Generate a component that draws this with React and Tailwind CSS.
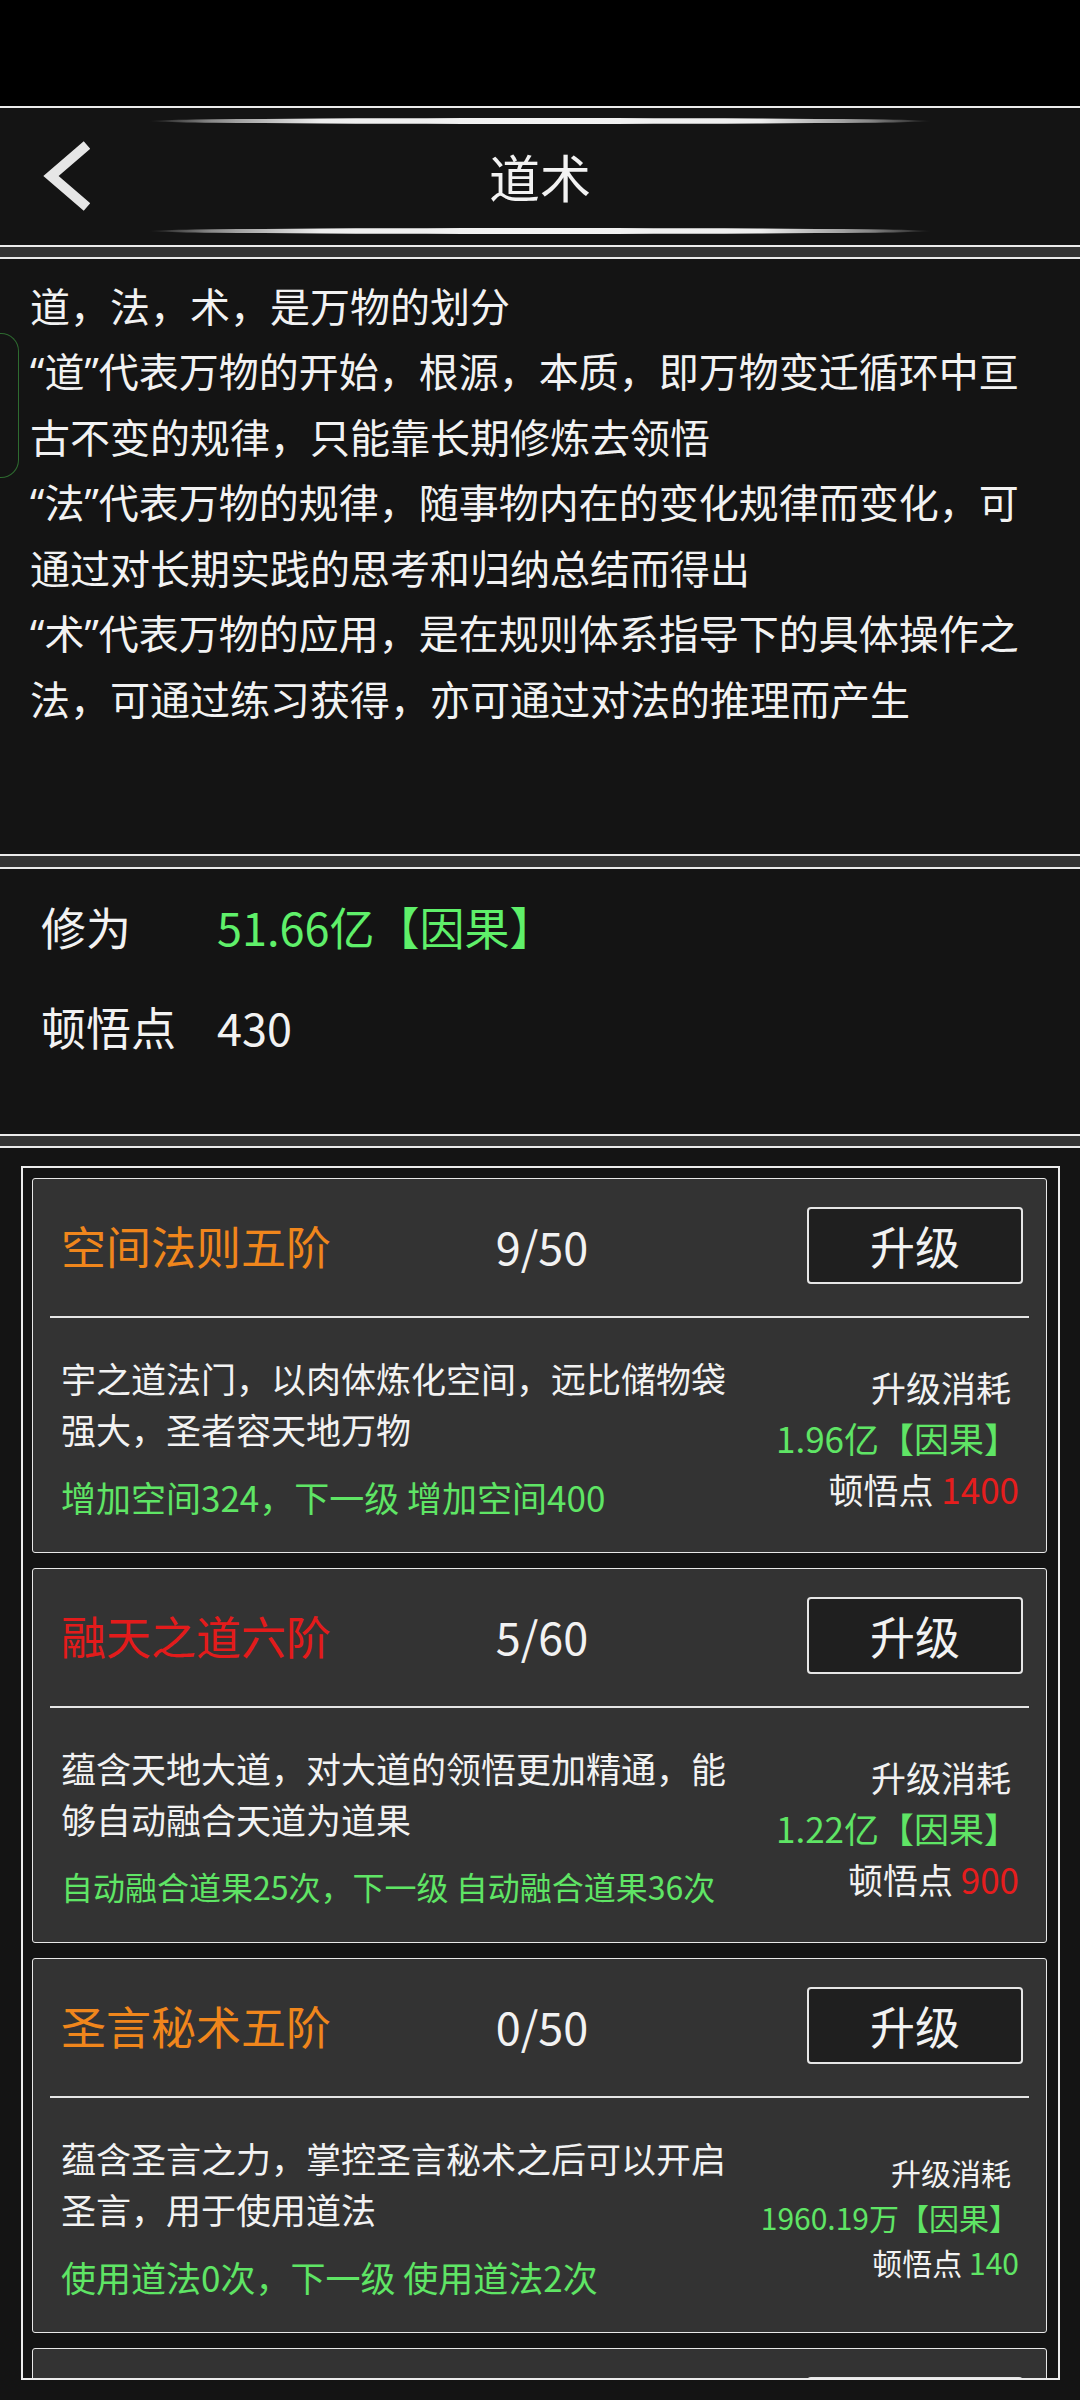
import React from 'react';

const items = [
  {
    name: '空间法则五阶',
    nameColor: 'text-[#f0861c]',
    level: '9/50',
    desc: '宇之道法门，以肉体炼化空间，远比储物袋强大，圣者容天地万物',
    effect: '增加空间324，下一级 增加空间400',
    effectSize: 'text-[35px]',
    cost: '1.96亿【因果】',
    points: '1400',
    pointsColor: 'text-[#e61d1d]',
    small: false,
  },
  {
    name: '融天之道六阶',
    nameColor: 'text-[#e31b1b]',
    level: '5/60',
    desc: '蕴含天地大道，对大道的领悟更加精通，能够自动融合天道为道果',
    effect: '自动融合道果25次，下一级 自动融合道果36次',
    effectSize: 'text-[32px]',
    cost: '1.22亿【因果】',
    points: '900',
    pointsColor: 'text-[#e61d1d]',
    small: false,
  },
  {
    name: '圣言秘术五阶',
    nameColor: 'text-[#f0861c]',
    level: '0/50',
    desc: '蕴含圣言之力，掌控圣言秘术之后可以开启圣言，用于使用道法',
    effect: '使用道法0次，下一级 使用道法2次',
    effectSize: 'text-[35px]',
    cost: '1960.19万【因果】',
    points: '140',
    pointsColor: 'text-[#5fe565]',
    small: true,
  },
];

// quoted word, then the rest of the line
const Q = ({ children }) => (
  <>
    <span className="font-['Noto_Sans',sans-serif]">“</span>
    {children}
    <span className="font-['Noto_Sans',sans-serif]">”</span>
  </>
);

const introLines = [
  <>道，法，术，是万物的划分</>,
  <><Q>道</Q>代表万物的开始，根源，本质，即万物变迁循环中亘</>,
  <>古不变的规律，只能靠长期修炼去领悟</>,
  <><Q>法</Q>代表万物的规律，随事物内在的变化规律而变化，可</>,
  <>通过对长期实践的思考和归纳总结而得出</>,
  <><Q>术</Q>代表万物的应用，是在规则体系指导下的具体操作之</>,
  <>法，可通过练习获得，亦可通过对法的推理而产生</>,
];

function GlowLine() {
  return (
    <div className="w-[782px] h-[6px] rounded-[50%] bg-[linear-gradient(90deg,transparent_0%,#8a8a8a_8%,#ededed_22%,#f2f2f2_50%,#ededed_78%,#8a8a8a_92%,transparent_100%)]" />
  );
}

function UpgradeButton({ label = '升级' }) {
  return (
    <button className="justify-self-end w-[216px] h-[77px] border-2 border-[#e6e6e6] rounded-[4px] bg-[#1f1f1f] text-[45px] leading-none text-[#f2f2f2] flex items-center justify-center">
      {label}
    </button>
  );
}

function SkillCard({ item }) {
  const right = item.small ? 'text-[30px] leading-[45px]' : 'text-[35px] leading-[51px]';
  return (
    <div className="w-[1015px] h-[375px] shrink-0 border border-[#e8e8e8] bg-[#333333] rounded-[3px] flex flex-col">
      {/* Title row */}
      <div className="h-[137px] pb-[4px] pl-[28px] pr-[23px] grid grid-cols-[1fr_auto_1fr] items-center">
        <span className={`text-[45px] leading-none whitespace-nowrap ${item.nameColor}`}>{item.name}</span>
        <span className="text-[45px] leading-none text-[#f2f2f2]">{item.level}</span>
        <UpgradeButton />
      </div>

      <div className="mx-[17px] h-[2px] bg-[#e6e6e6]" />

      {/* Body */}
      <div className="h-[234px] pt-[4px] pl-[28px] pr-[27px] flex items-center">
        <div className="w-[680px] shrink-0">
          <p className="text-[35px] leading-[51px] text-[#f2f2f2]">{item.desc}</p>
          <p className={`mt-[17px] leading-[51px] whitespace-nowrap text-[#5fe565] ${item.effectSize}`}>
            {item.effect}
          </p>
        </div>
        <div className={`flex-1 text-right whitespace-nowrap ${right}`}>
          <div className="mr-[8px] text-[#f2f2f2]">升级消耗</div>
          <div className="text-[#5fe565]">{item.cost}</div>
          <div className="text-[#f2f2f2]">
            顿悟点 <span className={item.pointsColor}>{item.points}</span>
          </div>
        </div>
      </div>
    </div>
  );
}

export default function App() {
  return (
    <div className="relative w-[1080px] h-[2400px] overflow-hidden bg-[#141414] flex flex-col font-['Noto_Sans_CJK_SC','Noto_Sans',sans-serif] text-[#f2f2f2]">
      <div className="h-[106px] shrink-0 bg-black" />

      {/* Header */}
      <div className="h-[141px] shrink-0 border-y-2 border-[#ececec] bg-[#141414] flex flex-col items-center pt-[10px] pb-[11px]">
        <GlowLine />
        <div className="flex-1 w-full grid grid-cols-[1fr_auto_1fr] items-center">
          <div className="pl-[40px]">
            <svg width="50" height="80" viewBox="0 0 50 80">
              <polyline points="47,9 11,40 47,71" fill="none" stroke="#e6e6e6" strokeWidth="10" />
            </svg>
          </div>
          <h1 className="text-[51px] leading-none">道术</h1>
          <div />
        </div>
        <GlowLine />
      </div>

      <div className="h-[10px] shrink-0 bg-[#353535]" />

      {/* Intro */}
      <div className="h-[599px] shrink-0 border-y-2 border-[#ececec] bg-[#141414] pt-[14px] pl-[30px] text-[40px] leading-[65px]">
        {introLines.map((line, i) => (
          <div key={i} className="whitespace-nowrap">{line}</div>
        ))}
      </div>

      <div className="h-[11px] shrink-0 bg-[#353535]" />

      {/* Stats */}
      <div className="h-[269px] shrink-0 border-y-2 border-[#ececec] bg-[#141414] pt-[28px] pl-[41px] grid grid-cols-[176px_1fr] auto-rows-[60px] gap-y-[40px] content-start text-[45px] leading-[60px]">
        <span>修为</span>
        <span className="text-[#5ff06a]">51.66亿【因果】</span>
        <span>顿悟点</span>
        <span>430</span>
      </div>

      <div className="h-[10px] shrink-0 bg-[#353535]" />

      {/* Skill list */}
      <div className="flex-1 border-t-2 border-[#ececec] bg-[#141414]">
        <div className="mt-[18px] ml-[21px] w-[1039px] h-[1214px] border-2 border-[#ececec] overflow-hidden pt-[10px] pl-[9px] flex flex-col gap-[15px]">
          {items.map((item) => (
            <SkillCard key={item.name} item={item} />
          ))}
          {/* next card, scrolled out of view */}
          <div className="w-[1015px] h-[375px] shrink-0 border border-[#e8e8e8] bg-[#333333] rounded-[3px]">
            <div className="h-[137px] pb-[4px] pr-[23px] grid grid-cols-[1fr_auto_1fr] items-center">
              <span />
              <span />
              <UpgradeButton label="" />
            </div>
          </div>
        </div>
      </div>

      {/* floating side handle */}
      <div className="absolute left-0 top-[333px] w-[19px] h-[145px] border-[1.5px] border-l-0 border-[#2e6b30] rounded-r-[18px]" />
    </div>
  );
}
